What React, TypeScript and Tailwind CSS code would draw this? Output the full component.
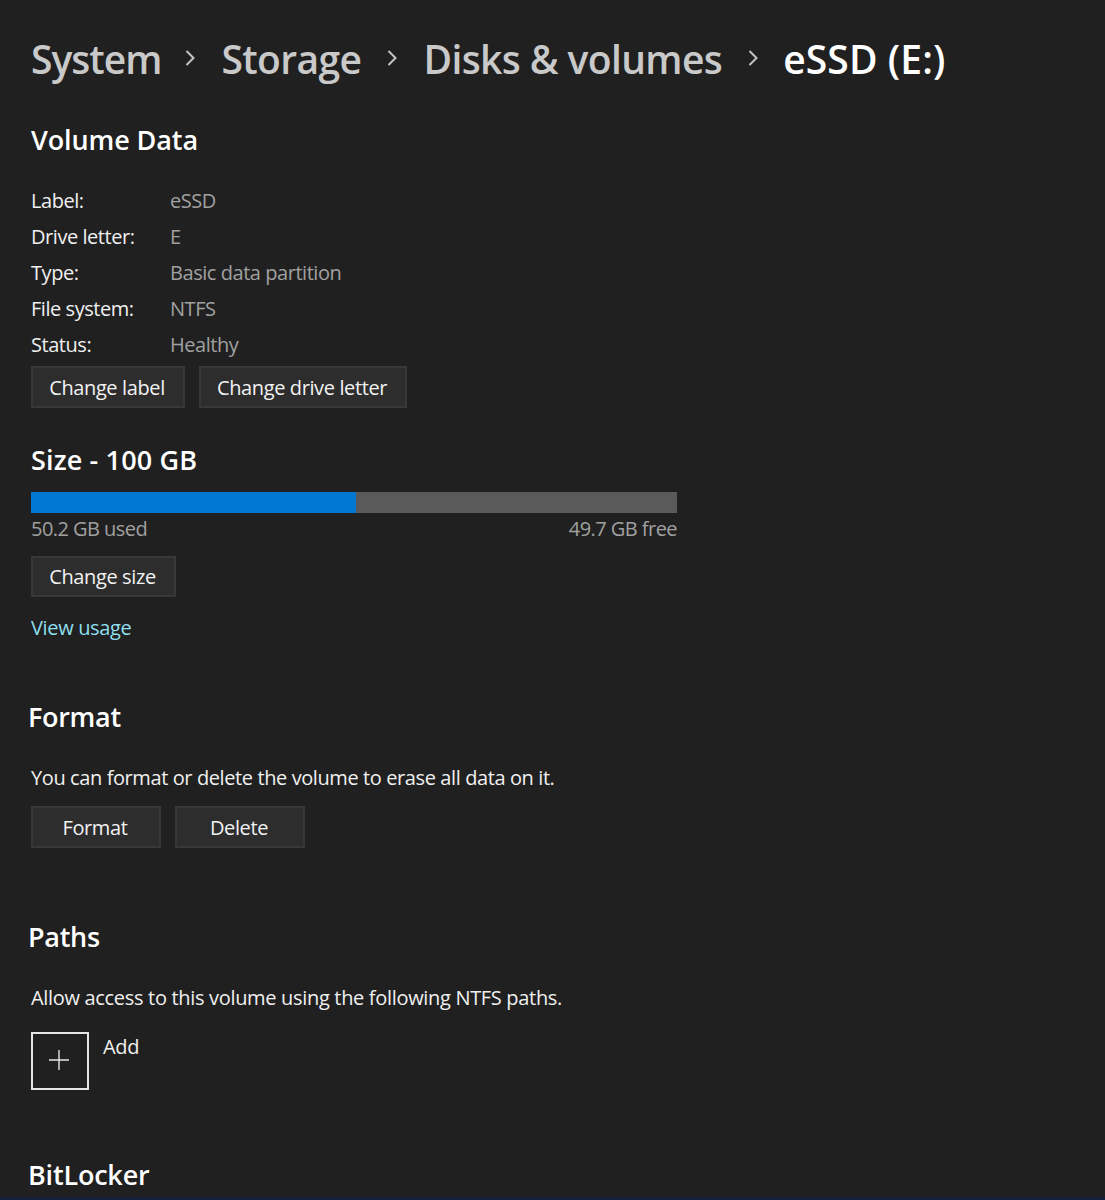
const Btn = ({ label, w, h = "h-[42px]" }: { label: string; w: string; h?: string }) => (
  <button className={`${w} ${h} flex items-center justify-center border-2 border-[#383838] bg-[#2d2d2d] pr-[2px] pt-px text-[20px] leading-none tracking-[-0.38px] text-[#f2f2f2]`}>
    {label}
  </button>
);

const Chevron = () => (
  <svg width="12" height="20" viewBox="0 0 12 20" className="mx-[25px] shrink-0" fill="none" stroke="#c4c4c4" strokeWidth="2">
    <path d="M2.5 3 L9.5 10 L2.5 17" />
  </svg>
);

const rows = [
  ["Label:", "eSSD"],
  ["Drive letter:", "E"],
  ["Type:", "Basic data partition"],
  ["File system:", "NTFS"],
  ["Status:", "Healthy"],
];

export default function App() {
  return (
    <div className="relative h-[1200px] w-[1105px] overflow-hidden bg-[#202020] font-['Open_Sans','Noto_Sans',sans-serif] text-white">
      <div className="pl-[31px] pt-[31px]">
        <div className="flex h-[54px] items-center text-[39px] font-semibold leading-none tracking-[-0.6px] text-[#c9c9c9]">
          <span className="mr-[-2px] tracking-[-1px]">System</span>
          <Chevron />
          <span>Storage</span>
          <Chevron />
          <span>Disks &amp; volumes</span>
          <Chevron />
          <span className="ml-[-1px] tracking-[0.1px] text-white">eSSD (E:)</span>
        </div>

        <h2 className="mt-[35px] h-[40px] text-[27px] font-semibold leading-[40px] tracking-[-0.1px]">Volume Data</h2>

        <div className="mt-[23px] flex flex-col">
          {rows.map(([k, v]) => (
            <div key={k} className="flex h-[36px] items-center text-[20px] leading-none tracking-[-0.45px]">
              <span className="w-[139px] text-[#f0f0f0]">{k}</span>
              <span className="text-[#a0a0a0]">{v}</span>
            </div>
          ))}
        </div>

        <div className="mt-[3px] flex gap-[14px]">
          <Btn label="Change label" w="w-[154px]" />
          <Btn label="Change drive letter" w="w-[208px]" />
        </div>

        <h2 className="mt-[32px] h-[40px] text-[27px] font-semibold leading-[40px] tracking-[0.15px]">Size - 100 GB</h2>

        <div className="mt-[12px] flex h-[21px] w-[646px] bg-[#5a5a5a]">
          <div className="h-full w-[325px] bg-[#0078d4]" />
        </div>
        <div className="flex h-[30px] w-[646px] items-center justify-between pt-px text-[20px] leading-none tracking-[-0.55px] text-[#a0a0a0]">
          <span>50.2 GB used</span>
          <span>49.7 GB free</span>
        </div>

        <div className="mt-[13px]">
          <Btn label="Change size" w="w-[145px]" h="h-[41px]" />
        </div>

        <div className="mt-[16px] h-[30px] text-[20px] leading-[30px] tracking-[-0.35px] text-[#8fdfec]">View usage</div>

        <h2 className="ml-[-3px] mt-[54px] h-[40px] text-[27px] font-semibold leading-[40px] tracking-[-0.3px]">Format</h2>

        <div className="mt-[26px] h-[30px] text-[20px] leading-[30px] tracking-[-0.4px] text-[#f0f0f0]">
          You can format or delete the volume to erase all data on it.
        </div>

        <div className="mt-[13px] flex gap-[14px]">
          <Btn label="Format" w="w-[130px]" />
          <Btn label="Delete" w="w-[130px]" />
        </div>

        <h2 className="ml-[-3px] mt-[69px] h-[40px] text-[27px] font-semibold leading-[40px] tracking-[-0.3px]">Paths</h2>

        <div className="mt-[26px] h-[30px] text-[20px] leading-[30px] tracking-[-0.32px] text-[#f0f0f0]">
          Allow access to this volume using the following NTFS paths.
        </div>

        <div className="mt-[19px] flex gap-[14px]">
          <div className="flex h-[58px] w-[58px] items-center justify-center border-2 border-[#e6e6e6]">
            <svg width="20" height="20" viewBox="0 0 20 20" stroke="#e6e6e6" strokeWidth="1.4" fill="none" className="-translate-x-px -translate-y-px">
              <path d="M10 0 V20 M0 10 H20" />
            </svg>
          </div>
          <div className="h-[30px] text-[20px] leading-[30px] tracking-[-0.35px] text-[#f0f0f0]">Add</div>
        </div>

        <h2 className="ml-[-3px] mt-[65px] h-[40px] text-[27px] font-semibold leading-[40px] tracking-[-0.2px]">BitLocker</h2>
      </div>
      <div className="absolute bottom-0 left-0 h-[3px] w-full bg-[#16213a]" />
    </div>
  );
}
